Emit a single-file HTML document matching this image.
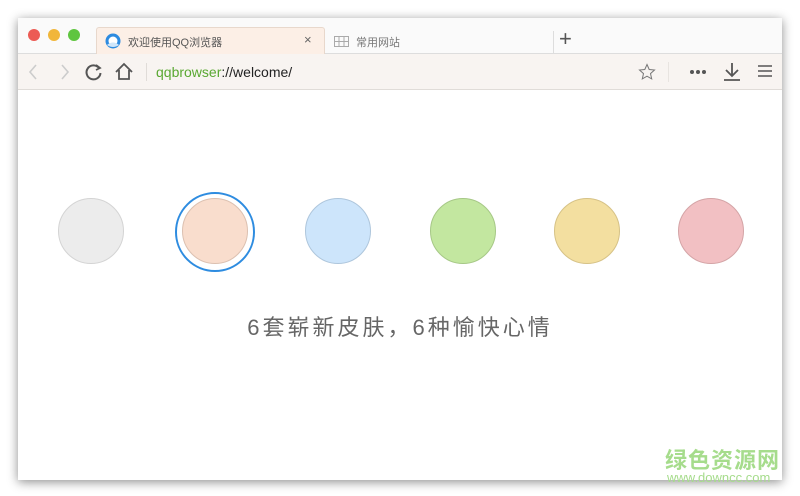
<!DOCTYPE html>
<html><head><meta charset="utf-8"><style>
*{margin:0;padding:0;box-sizing:border-box}
body{width:800px;height:496px;background:#fff;position:relative;overflow:hidden;font-family:"Liberation Sans","Noto Sans CJK SC",sans-serif}
.win{position:absolute;left:18px;top:18px;width:764px;height:462px;background:#fff;box-shadow:0 2px 10px rgba(0,0,0,.45)}
.title{position:absolute;left:0;top:0;width:764px;height:36px;background:#fafafa;border-bottom:1px solid #ddd}
.dot{position:absolute;top:11px;width:12px;height:12px;border-radius:50%}
.tab{position:absolute;left:78px;top:9px;width:229px;height:27px;background:#fcefe6;border:1px solid #e8d8cc;border-bottom:none;border-radius:3px 3px 0 0;font-size:11px;color:#555}
.tool{position:absolute;left:0;top:36px;width:764px;height:36px;background:#f8f4f1;border-bottom:1px solid #e0dcd8}
.c{position:absolute;width:66px;height:66px;border-radius:50%;top:180px}
.t{position:absolute;left:0;width:764px;top:292px;text-align:center;font-size:22px;color:#666;letter-spacing:3px}
</style></head><body>
<div class="win">
<div class="title">
<div class="dot" style="left:10px;background:#ec5b54"></div>
<div class="dot" style="left:30px;background:#f1b63a"></div>
<div class="dot" style="left:50px;background:#5fc53f"></div>
<div class="tab">
<svg style="position:absolute;left:8px;top:5px" width="16" height="16"><circle cx="8" cy="8" r="7.5" fill="#2d8be0"/><circle cx="8" cy="8" r="4.5" fill="#fff"/><path d="M2 12 Q8 7 14 12 Q8 16 2 12Z" fill="#cfe6fa"/></svg>
<span style="position:absolute;left:31px;top:6px">欢迎使用QQ浏览器</span>
<span style="position:absolute;left:207px;top:4px;font-size:13px;color:#666">×</span>
</div>
<svg style="position:absolute;left:316px;top:18px" width="15" height="11"><rect x=".5" y=".5" width="14" height="10" fill="none" stroke="#aaa"/><path d="M5 .5V10.5M10 .5V10.5M.5 5.5H14.5" stroke="#aaa"/></svg>
<span style="position:absolute;left:338px;top:16px;font-size:11px;color:#777">常用网站</span>
<div style="position:absolute;left:535px;top:13px;width:1px;height:23px;background:#ddd"></div>
<span style="position:absolute;left:541px;top:8px;font-size:22px;color:#555;font-weight:300">+</span>
</div>
<div class="tool">
<svg style="position:absolute;left:6px;top:8px" width="80" height="20" fill="none" stroke-width="1.6">
<path d="M12 3 6 10l6 7" stroke="#ccc"/><path d="M38 3l6 7-6 7" stroke="#ccc"/>
<path d="M75 6a7 7 0 1 0 1.5 5" stroke="#555" stroke-width="2"/><path d="M72 3l4 3-4 2" stroke="#555" stroke-width="1.8"/>
</svg>
<svg style="position:absolute;left:96px;top:8px" width="20" height="20" fill="none" stroke="#555" stroke-width="1.8"><path d="M2 10 10 2l8 8M5 8v9h10V8"/></svg>
<div style="position:absolute;left:128px;top:9px;width:1px;height:18px;background:#e0dcd8"></div>
<span style="position:absolute;left:138px;top:10px;font-size:14px;color:#5aa832">qqbrowser<span style="color:#222">://welcome/</span></span>
<svg style="position:absolute;left:620px;top:9px" width="18" height="18"><path d="M9 1.5l2.2 5 5.3.5-4 3.6 1.2 5.3L9 13.2 4.3 15.9l1.2-5.3-4-3.6 5.3-.5z" fill="none" stroke="#777"/></svg>
<div style="position:absolute;left:650px;top:8px;width:1px;height:20px;background:#e8e4e0"></div>
<svg style="position:absolute;left:671px;top:15px" width="20" height="6" fill="#555"><circle cx="3" cy="3" r="2"/><circle cx="9" cy="3" r="2"/><circle cx="15" cy="3" r="2"/></svg>
<svg style="position:absolute;left:705px;top:8px" width="18" height="20" stroke="#555" stroke-width="1.8" fill="none"><path d="M9 1v12M3 8l6 6 6-6M1 18h16"/></svg>
<svg style="position:absolute;left:740px;top:10px" width="14" height="14" stroke="#555" stroke-width="1.6"><path d="M0 2h14M0 7h14M0 12h14"/></svg>
</div>
<div class="c" style="left:40px;background:#ececec;border:1px solid #d4d4d4"></div>
<div style="position:absolute;left:157px;top:174px;width:80px;height:80px;border-radius:50%;border:2px solid #2e8ce0"></div>
<div class="c" style="left:164px;background:#f9ddcd;border:1px solid #dcc0b0"></div>
<div class="c" style="left:287px;background:#cde5fb;border:1px solid #aec6dc"></div>
<div class="c" style="left:412px;background:#c3e7a0;border:1px solid #a6c886"></div>
<div class="c" style="left:536px;background:#f3dfa0;border:1px solid #d6c286"></div>
<div class="c" style="left:660px;background:#f2c0c3;border:1px solid #d4a4a6"></div>
<div class="t">6套崭新皮肤，6种愉快心情</div>
<div style="position:absolute;left:647px;top:425px;font-size:22px;font-weight:bold;color:#a6dc8c;letter-spacing:1px">绿色资源网</div>
<div style="position:absolute;left:649px;top:452px;font-size:13px;color:#a6dc8c">www.downcc.com</div>
</div>
</body></html>
